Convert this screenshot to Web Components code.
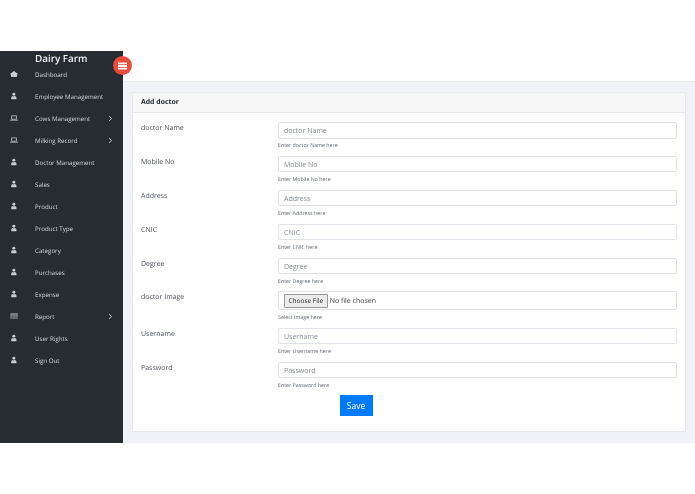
<!DOCTYPE html>
<html lang="en"><head><meta charset="utf-8"><title>Add doctor</title>
<style>
html,body{margin:0;background:#fff;font-family:"Open Sans",sans-serif;text-rendering:geometricPrecision}
body{padding:51px 0;height:392px;overflow:hidden}
</style></head><body>
<app-shell>
  <side-bar slot="side" brand="Dairy Farm">
    <nav-row icon="home">Dashboard</nav-row>
    <nav-row icon="user">Employee Management</nav-row>
    <nav-row icon="laptop" more>Cows Management</nav-row>
    <nav-row icon="laptop" more>Milking Record</nav-row>
    <nav-row icon="user">Doctor Management</nav-row>
    <nav-row icon="user">Sales</nav-row>
    <nav-row icon="user">Product</nav-row>
    <nav-row icon="user">Product Type</nav-row>
    <nav-row icon="user">Category</nav-row>
    <nav-row icon="user">Purchases</nav-row>
    <nav-row icon="user">Expense</nav-row>
    <nav-row icon="table" more>Report</nav-row>
    <nav-row icon="user">User Rights</nav-row>
    <nav-row icon="user">Sign Out</nav-row>
  </side-bar>
  <form-card title="Add doctor">
    <form-field label="doctor Name" help="Enter doctor Name here"></form-field>
    <form-field label="Mobile No" help="Enter Mobile No here"></form-field>
    <form-field label="Address" help="Enter Address here"></form-field>
    <form-field label="CNIC" help="Enter CNIC here"></form-field>
    <form-field label="Degree" help="Enter Degree here"></form-field>
    <form-field label="doctor Image" help="Select Image here" file></form-field>
    <form-field label="Username" help="Enter Username here"></form-field>
    <form-field label="Password" help="Enter Password here"></form-field>
    <save-button>Save</save-button>
  </form-card>
</app-shell>
<script>
const ICONS={
home:'<path fill="currentColor" d="M5.200 1.200 10 4.800V6H9V9H1.400V6H.4V4.800Z"/>',
user:'<circle cx="5" cy="2.700" r="1.900" fill="currentColor"/><path fill="currentColor" d="M1.600 9.200V7.200C1.600 5.600 2.800 5 3.600 4.900L5 5.600 6.400 4.900C7.200 5 8.400 5.600 8.400 7.200V9.200Z"/>',
laptop:'<path fill="none" stroke="currentColor" d="M2 2.200h6.400v4.400H2z"/><path fill="currentColor" d="M0 7.300h10.400v1H0z"/>',
table:'<path fill="currentColor" opacity=".7" d="M.5 1.500h9.500v7H.5z"/><path stroke="#272c33" stroke-width=".5" fill="none" d="M.5 3.600h9.500M.5 5.400h9.500M.5 7h9.500M3.400 3.600v5M6.800 3.600v5"/>'};
function def(name,html,init){customElements.define(name,class extends HTMLElement{
  connectedCallback(){ if(this.shadowRoot)return; const s=this.attachShadow({mode:'open'}); s.innerHTML=typeof html==='function'?html(this):html; init&&init(this,s);} });}
def('app-shell',`<style>
:host{display:grid;grid-template-columns:123px 1fr;height:392px;position:relative;filter:blur(.35px)}
.main{display:flex;flex-direction:column;min-width:0;background:#f1f2f7}
.top{height:31px;flex:none;background:#fff;border-bottom:1px solid #e9ebf1;box-sizing:border-box}
.content{padding:10px 9px 11px 9px;flex:1;display:flex;min-height:0}
.toggle{position:absolute;left:113px;top:5px;width:19px;height:19px;border-radius:50%;background:#e74c3c;color:#fff;display:grid;place-items:center}
</style><slot name="side"></slot>
<div class="main"><div class="top"></div><div class="content"><slot></slot></div></div>
<div class="toggle"><svg width="9" height="8" viewBox="0 0 9 8"><path fill="#fff" d="M0 .4h9v1.900H0zM0 3h9v1.900H0zM0 5.700h9v1.900H0z"/></svg></div>`);
def('side-bar',h=>`<style>
:host{display:flex;flex-direction:column;background:#272c33;color:#c8cbce;min-height:0}
.brand{height:12px;line-height:15px;padding-left:35px;font-size:9.900px;font-weight:600;color:#f2f3f3;white-space:nowrap}
.list{display:flex;flex-direction:column}
</style><div class="brand">${h.getAttribute('brand')}</div><div class="list"><slot></slot></div>`);
def('nav-row',h=>`<style>
:host{display:flex;align-items:center;height:22px;font-size:6.200px;color:#d4d6d8}
.ic{width:35px;flex:none;display:flex;padding-left:8.500px;box-sizing:border-box;color:#c9ccce}
svg{width:10px;height:10px;display:block;transform:scale(.8)}
.t{flex:1;white-space:nowrap}
.m{width:16px;flex:none;display:flex}
</style><span class="ic"><svg viewBox="0 0 10.400 10">${ICONS[h.getAttribute('icon')]}</svg></span><span class="t"><slot></slot></span>${h.hasAttribute('more')?'<span class="m"><svg viewBox="0 0 10 10" style="width:7px;height:7px;transform:none"><path d="M3 1.500 6.500 5 3 8.500" fill="none" stroke="currentColor" stroke-width="1.300"/></svg></span>':''}`);
def('form-card',h=>`<style>
:host{display:flex;flex-direction:column;flex:1;background:#fff;border:1px solid #e8e9ec;box-sizing:border-box;min-width:0}
header{height:20px;flex:none;box-sizing:border-box;background:#f7f7f7;border-bottom:1px solid #e9e9e9;padding-left:8px;font-size:6.900px;font-weight:700;color:#22262b;line-height:20px}
.body{padding:9px 8px 0 8px;display:flex;flex-direction:column}
</style><header>${h.getAttribute('title')}</header><div class="body"><slot></slot></div>`);
def('form-field',h=>{const l=h.getAttribute('label'),p=h.getAttribute('help'),f=h.hasAttribute('file');return `<style>
:host{display:grid;grid-template-columns:137px 1fr;height:${f?36.3:33.900}px;font-size:7px;color:#4a5057}
.l{line-height:12px;padding-top:1px}
.r{display:flex;flex-direction:column;min-width:0}
.box{box-sizing:border-box;width:100%;height:${f?19:16.500}px;border:1px solid #dfe2e6;border-radius:2px;background:#fff;font:7px "Open Sans",sans-serif;color:#495057;padding:.5px 5px 0;outline:none;display:flex;align-items:center}
input::placeholder{color:#858b92;opacity:1}
.help{font-size:5.300px;line-height:7px;margin-top:3.500px;color:#5f676f;white-space:nowrap}
.btn{color:#222;background:#ececec;border:1px solid #999;border-radius:1px;height:14px;line-height:12px;box-sizing:border-box;padding:0 3.500px;margin-right:2px;white-space:nowrap;font-size:6.500px}
.nf{color:#444;white-space:nowrap}
</style><div class="l">${l}</div><div class="r">${f?`<div class="box"><span class="btn">Choose File</span><span class="nf">No file chosen</span></div>`:`<input class="box" type="text" placeholder="${l}" aria-label="${l}">`}<div class="help">${p}</div></div>`});
def('save-button',`<style>
:host{display:flex;justify-content:center;box-sizing:border-box;padding-right:106px;margin-top:-.7px}
button{width:33px;height:21px;border:0;background:#007bff;color:#fff;font:8.500px "Open Sans",sans-serif;padding:0}
</style><button><slot></slot></button>`);
</script>
</body></html>
